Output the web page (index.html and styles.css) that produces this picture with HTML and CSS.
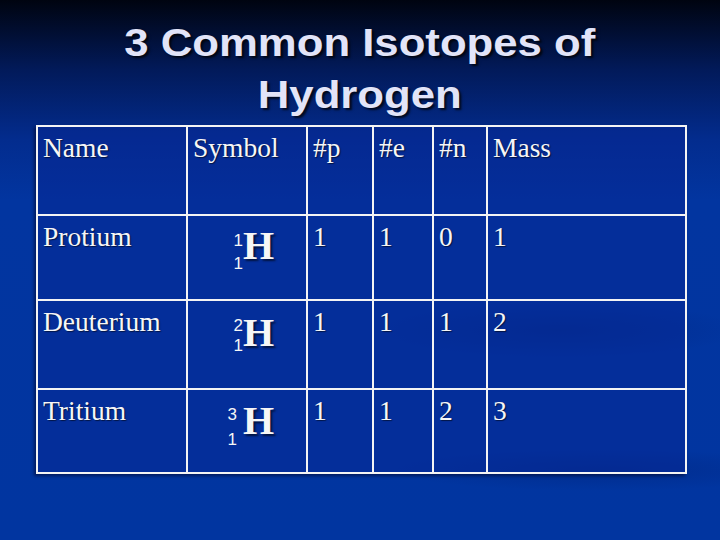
FILE: index.html
```html
<!DOCTYPE html>
<html>
<head>
<meta charset="utf-8">
<link rel="stylesheet" href="styles.css">
</head>
<body>
<div class="slide">
  <h1 class="title"><span class="title-text">3 Common Isotopes of<br>Hydrogen</span></h1>
  <table class="iso">
    <colgroup>
      <col class="c-name"><col class="c-sym"><col class="c-p"><col class="c-e"><col class="c-n"><col class="c-mass">
    </colgroup>
    <tr class="r-head">
      <td>Name</td><td>Symbol</td><td>#p</td><td>#e</td><td>#n</td><td>Mass</td>
    </tr>
    <tr class="r-1">
      <td>Protium</td>
      <td class="sym"><span class="nuc"><span class="idx idx-1"><span>1</span><span>1</span></span><span class="el">H</span></span></td>
      <td>1</td><td>1</td><td>0</td><td>1</td>
    </tr>
    <tr class="r-2">
      <td>Deuterium</td>
      <td class="sym"><span class="nuc"><span class="idx idx-2"><span>2</span><span>1</span></span><span class="el">H</span></span></td>
      <td>1</td><td>1</td><td>1</td><td>2</td>
    </tr>
    <tr class="r-3">
      <td>Tritium</td>
      <td class="sym"><span class="nuc"><span class="idx idx-3"><span>3</span><span>1</span></span><span class="el">H</span></span></td>
      <td>1</td><td>1</td><td>2</td><td>3</td>
    </tr>
  </table>
</div>
</body>
</html>
```

FILE: styles.css
```css
html, body {
  margin: 0;
  padding: 0;
}
body {
  width: 720px;
  height: 540px;
  overflow: hidden;
  background: linear-gradient(180deg, #000410 0px, #021a5a 70px, #032c8e 140px, #0235a0 200px, #0135a0 540px);
}
.slide {
  height: 540px;
  display: flex;
  flex-direction: column;
  align-items: flex-start;
  background:
    radial-gradient(ellipse 260px 40px at 560px 330px, rgba(0,20,90,0.25), rgba(0,20,90,0) 70%),
    radial-gradient(ellipse 300px 30px at 600px 470px, rgba(0,20,90,0.25), rgba(0,20,90,0) 70%);
}
.title {
  align-self: stretch;
  margin: 17px 0 4px 0;
  font-family: "Liberation Sans", Arial, sans-serif;
  font-weight: bold;
  font-size: 38px;
  line-height: 52px;
  text-align: center;
  color: #e2e4f8;
  text-shadow: 2px 2px 2px rgba(0,0,0,0.75);
}
.title-text {
  display: inline-block;
  transform: scaleX(1.15);
}
.iso {
  margin-left: 36px;
  width: 649px;
  table-layout: fixed;
  border-collapse: collapse;
  border: 2px solid #f4f4f4;
  font-family: "Liberation Serif", "Times New Roman", serif;
  font-size: 27.5px;
  line-height: 32px;
  color: #f6f6f6;
  text-shadow: 1px 1px 1px rgba(0,0,0,0.55);
  box-shadow: -2px 2px 3px rgba(0,0,30,0.5);
}
.c-name { width: 150px; }
.c-sym { width: 120px; }
.c-p { width: 66px; }
.c-e { width: 60px; }
.c-n { width: 54px; }
.c-mass { width: 199px; }
.iso td {
  border: 2px solid #f4f4f4;
  vertical-align: top;
  padding: 5px 4px 0 5px;
  background: rgba(8, 40, 150, 0.55);
}
.r-head { height: 89px; }
.r-1 { height: 85px; }
.r-2 { height: 89px; }
.r-3 { height: 84px; }
.iso td.sym {
  padding: 5px 0 0 34px;
}
.nuc {
  display: inline-flex;
  align-items: flex-start;
}
.idx {
  display: flex;
  flex-direction: column;
  align-items: flex-end;
  box-sizing: border-box;
  width: 21px;
  font-family: "Liberation Sans", Arial, sans-serif;
  font-size: 17px;
  line-height: 12px;
  text-shadow: none;
}
.idx-1 { margin-top: 9px; gap: 11px; }
.idx-2 { margin-top: 7px; gap: 8px; }
.idx-3 { margin-top: 8px; gap: 13px; padding-right: 6px; }
.el {
  font-family: "Liberation Serif", "Times New Roman", serif;
  font-weight: bold;
  font-size: 40px;
  line-height: 40px;
  text-shadow: 2px 2px 2px rgba(0,0,0,0.6);
}
```
